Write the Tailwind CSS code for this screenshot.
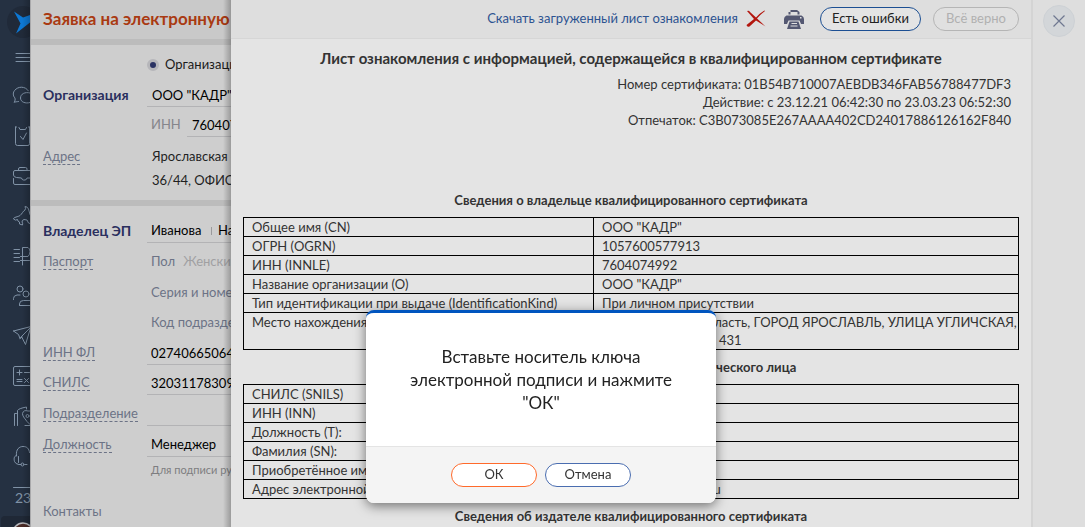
<!DOCTYPE html>
<html lang="ru">
<head>
<meta charset="utf-8">
<title>Заявка на электронную подпись</title>
<script src="https://cdn.jsdelivr.net/npm/@tailwindcss/browser@4"></script>
</head>
<body class="h-screen overflow-hidden bg-[#dedede] font-['Lato','Noto_Sans',sans-serif] text-[13px] text-[#333]">
<div class="flex h-full">

  <!-- Боковая навигация -->
  <nav class="relative w-[30px] shrink-0 overflow-hidden bg-[#253142] text-[#8092a6]" aria-label="Разделы">
    <svg class="block h-[527px] w-[30px]" viewBox="0 0 30 527" fill="none" stroke="currentColor" stroke-width="1" stroke-linecap="round" stroke-linejoin="round">
      <circle cx="23" cy="22" r="16" fill="#202a39" stroke="none"/>
      <path d="M14 11.500L23 17.500L30 15V22.500L16 33.500L20.500 23.500Z" fill="#0d78d4" stroke="none"/>
      <path d="M16 53.500H30M16 57.500H30M16 61.500H30"/>
      <path d="M18.500 101.500c-1.500 .3-3.500 .3-4.500 .8c1.200-1.500 1.500-3 .8-4.500c-2-2-2-5.500 0-7.500c3-4 10.500-4.500 13.500 .5"/>
      <path d="M30 93c-5-1.500-9.500 1-9.500 5c0 4 5 6 9.500 4.500"/>
      <path d="M15.500 127v16.500q0 2 2 2H28q1.500 0 1.500-2V127M15.500 127H16.500M28.500 127h1M19 127.500l1 2h5.500l1-2M20.500 136.500l2.500 3l3.500-6.500"/>
      <path d="M30 170.500H15q-1.500 0-1.500 1.500v3q0 2 3 2.500l5 .5q.5 2 2 2h1.500q1.500 0 2-2H30M13.500 178.500v4.500q0 1.500 1.500 1.500H30M18.500 170v-1q0-1.500 1.500-1.500h5.500q1.500 0 1.500 1.500v1"/>
      <path d="M30 214.500l-1.500-5.500q-1-2.500-3.500-2.500q1 2 0 3.500c-2 1-3 4-5 5.500c-2 1.500-6.500 1.500-6.500 3.500q2 2 4 .5q0 2 2 2.500v2l3 1q.5-2-.5-3q0-2 2-2.500l3 .5l1.500 3l1.500 .5"/>
      <path d="M14 249.500h5.500M14 253.500h5.500M14 257.500h5.500M14 261.500h5.500M22.500 265v-17.500H28q2 1 2 4t-2 5H20.500M20.500 260.500h9"/>
      <circle cx="20" cy="289" r="3"/><circle cx="26" cy="294" r="3"/>
      <path d="M13.500 299.500v-1q0-3 3.500-3.500h3M19.500 305v-1q0-3.500 4-3.500h6.500M19.500 305.500H30"/>
      <path d="M13.500 331L31 326.500L25.500 344.500L21.500 336.500L30 328M13.500 331l5 3.500l1.500 4l1.500-2M20 338.500l2-1.500"/>
      <path d="M30 366.500H15q-1.500 0-1.500 1.500v16q0 1.500 1.500 1.500h15M17 372.500h5M19.500 370v5M24.500 372.500h5M17 379.500h5M17 381.500h5M24.500 378.500l4 4M28.500 378.500l-4 4"/>
      <path d="M16.500 413.500h-2v12M17.500 425.500v-15q1-2 9-3.500v2M30 425.500h-5M30 424.500l-3-3c-3-4-4.500-5.500-4.500-8q1-4 5.500-2.500h2"/><circle cx="27.500" cy="416" r="1.500"/>
      <path d="M16.500 456c-1-7 3-9.500 6.500-9.500c4 0 6 2 6.500 6M16.500 455.500c-3 .5-2.500 4-2 6q1 2.500 4 3M18.500 456.500v6M19 464.500h2M25 464.500h2"/><circle cx="22.500" cy="464.500" r="1.500"/>
      <path d="M13.500 487.500H30"/>
      <text x="15" y="503" fill="currentColor" stroke="none" font-size="14">23</text>
      <rect x="1" y="516" width="32" height="14" rx="4" fill="#1f2836" stroke="none"/>
      <circle cx="23" cy="533" r="10" fill="#4a2a25" stroke="#b7b7bb" stroke-width="1.500"/>
    </svg>
    <div class="absolute inset-y-0 right-0 w-2 bg-linear-to-r from-transparent to-black/20"></div>
  </nav>

  <!-- Заявка -->
  <section class="relative w-[201px] shrink-0 overflow-hidden border-l border-[#a9a9ab] bg-[#cecece] whitespace-nowrap text-[#6c7386]">
    <h1 class="h-[39px] overflow-hidden bg-[#c9c9c9] pl-3 text-[17px] leading-[37px] font-bold text-[#a93a12]">Заявка на электронную подпись</h1>
    <div class="h-1.5 bg-[#bcbcbc]"></div>
    <form class="text-[13px]">
      <div class="flex h-[35px] items-center gap-1.5 pt-1 pl-[116px] text-[#1a1a1a]">
        <input id="org" type="radio" name="kind" checked class="size-3 shrink-0 appearance-none rounded-full border-3 border-[#b6b6ba] bg-[#2a3263]">
        <label for="org">Организация</label>
      </div>
      <div class="flex h-[30px] items-center pl-3">
        <label for="name" class="w-[104px] shrink-0 text-[14px] leading-6 font-bold text-[#2a2f5e]">Организация</label>
        <input id="name" class="h-6 w-40 border-b border-[#b3b3b5] pl-[5px] text-black" value='ООО "КАДР"'>
      </div>
      <div class="flex h-[30px] items-center pl-[120px]">
        <label for="inn" class="w-9 shrink-0 text-[#85858b]">ИНН</label>
        <input id="inn" class="h-6 w-40 border-b border-[#b3b3b5] pl-[5px] text-black" value="7604074992">
      </div>
      <div class="flex h-[60px] pt-1 pl-3 leading-6">
        <span class="w-[109px] shrink-0"><a href="#" class="border-b border-dashed border-[#6c7386]">Адрес</a></span>
        <p class="text-[#1f1f1f]">Ярославская область,<br>36/44, ОФИС 431</p>
      </div>
      <div class="h-1.5 bg-[#bcbcbc]"></div>
      <div class="flex h-10 items-center pt-2.5 pl-3">
        <label for="fio" class="w-[104px] shrink-0 text-[14px] leading-6 font-bold text-[#2a2f5e]">Владелец ЭП</label>
        <div class="flex h-6 w-40 shrink-0 items-center gap-1.5 border-b border-[#b3b3b5] pl-1 text-black">
          <input id="fio" class="w-[54px]" value="Иванова"><span class="h-2 w-px bg-[#9a9a9c]"></span><span>Наталья</span>
        </div>
      </div>
      <div class="flex h-[31px] items-center pl-3">
        <span class="w-[108px] shrink-0"><a href="#" class="border-b border-dashed border-[#6c7386]">Паспорт</a></span>
        <span>Пол</span><span class="pl-2 text-[#a0a0a2]">Женский</span>
      </div>
      <div class="flex h-[31px] items-center pl-[120px]">Серия и номер</div>
      <div class="flex h-[30px] items-center pl-[120px]">Код подразделения</div>
      <div class="flex h-[30px] items-center pl-3">
        <label for="innfl" class="w-[104px] shrink-0"><span class="border-b border-dashed border-[#6c7386]">ИНН ФЛ</span></label>
        <input id="innfl" class="h-6 w-40 border-b border-[#b3b3b5] pl-1 text-black" value="027406650640">
      </div>
      <div class="flex h-[30px] items-center pl-3">
        <label for="snils" class="w-[104px] shrink-0"><span class="border-b border-dashed border-[#6c7386]">СНИЛС</span></label>
        <input id="snils" class="h-6 w-40 border-b border-[#b3b3b5] pl-1 text-black" value="32031178309">
      </div>
      <div class="flex h-[31px] items-center pl-3">
        <label for="dep" class="w-[104px] shrink-0"><span class="border-b border-dashed border-[#6c7386]">Подразделение</span></label>
        <input id="dep" class="h-6 w-40 border-b border-[#b3b3b5] pl-1 text-black">
      </div>
      <div class="flex h-[31px] items-center pl-3">
        <label for="post" class="w-[104px] shrink-0"><span class="border-b border-dashed border-[#6c7386]">Должность</span></label>
        <input id="post" class="h-6 w-40 border-b border-[#b3b3b5] pl-1 text-black" value="Менеджер">
      </div>
      <p class="h-9 pl-[120px] text-[11px] leading-5 text-[#7d7d80]">Для подписи руководителя</p>
      <p class="pl-3 leading-[30px]">Контакты</p>
    </form>
    <div class="absolute inset-y-0 right-0 w-2 bg-linear-to-r from-transparent to-black/25"></div>
  </section>

  <!-- Лист ознакомления -->
  <main class="flex min-w-0 flex-1 flex-col overflow-hidden bg-[#e4e4e4]">
    <header class="flex h-[39px] shrink-0 items-center justify-end border-b border-[#d6d6d6] bg-[#dedede] pr-3">
      <a href="#" class="flex items-center gap-2 text-[#2d5391]">Скачать загруженный лист ознакомления
        <svg class="h-[18px] w-5" viewBox="0 0 20 18"><path d="M1 1Q3 0 4 2L10 7.500Q14 3 18.500 .5L19 1Q15 4 11 8.500L19.500 16.500L10 10.500L3.500 16.500Q1 17.500 .5 15L8 9Z" fill="#b3160e"/></svg>
      </a>
      <button type="button" aria-label="Печать" class="ml-4.5 text-[#545872]">
        <svg class="h-[19px] w-5" viewBox="0 0 20 19" fill="currentColor"><path d="M6.500 0H13L15.500 2V4.500H4.500V2H6.500ZM6.500 2V4.500H13.500V2ZM2.500 5.500H17.500Q20 6.500 20 9V14H17L15.500 10.500H4.500L3 14H0V9Q0 6.500 2.500 5.500ZM16 7V8.500H17.500V7ZM5.500 11.500H14.500L17 19H3ZM7.500 13V14H13V13ZM6.500 15.500V16.500H13.500V15.500Z" fill-rule="evenodd"/></svg>
      </button>
      <button type="button" class="ml-4 h-6 w-[101px] rounded-full border border-[#1c4f93] bg-[#e4e4e4] text-[#222]">Есть ошибки</button>
      <button type="button" disabled class="ml-3 h-6 w-[86px] rounded-full border border-[#b5b5b5] bg-[#e0e0e0] text-[#b0b0b0]">Всё верно</button>
    </header>
    <article class="px-3">
      <h2 class="pt-2 text-center text-[15px] leading-[22px] font-bold">Лист ознакомления с информацией, содержащейся в квалифицированном сертификате</h2>
      <div class="pt-1.5 pr-2 text-right leading-[18px]">
        <p>Номер сертификата: 01B54B710007AEBDB346FAB56788477DF3</p>
        <p>Действие: с 23.12.21 06:42:30 по 23.03.23 06:52:30</p>
        <p>Отпечаток: C3B073085E267AAAA402CD24017886126162F840</p>
      </div>
      <h3 class="mt-[62px] mb-2 text-center leading-[18px] font-bold">Сведения о владельце квалифицированного сертификата</h3>
      <table class="w-full table-fixed border-collapse border border-black leading-[18px] [&_td]:border [&_td]:border-black [&_td]:px-2 [&_td]:py-0 [&_td]:align-top">
        <colgroup><col class="w-[350px]"><col></colgroup>
        <tbody>
          <tr><td>Общее имя (CN)</td><td>ООО "КАДР"</td></tr>
          <tr><td>ОГРН (OGRN)</td><td>1057600577913</td></tr>
          <tr><td>ИНН (INNLE)</td><td>7604074992</td></tr>
          <tr><td>Название организации (О)</td><td>ООО "КАДР"</td></tr>
          <tr><td>Тип идентификации при выдаче (IdentificationKind)</td><td>При личном присутствии</td></tr>
          <tr><td>Место нахождения юридического лица</td><td class="pr-0! whitespace-nowrap">76 Ярославская область, ГОРОД ЯРОСЛАВЛЬ, УЛИЦА УГЛИЧСКАЯ,<br>ДОМ 36/44,ОФИС 431</td></tr>
        </tbody>
      </table>
      <h3 class="my-2 text-center leading-[18px] font-bold">Данные о владельце сертификата - физического лица</h3>
      <table class="w-full table-fixed border-collapse border border-black leading-[18px] [&_td]:border [&_td]:border-black [&_td]:px-2 [&_td]:py-0">
        <colgroup><col class="w-[350px]"><col></colgroup>
        <tbody>
          <tr><td>СНИЛС (SNILS)</td><td>32031178309</td></tr>
          <tr><td>ИНН (INN)</td><td>027406650640</td></tr>
          <tr><td>Должность (T):</td><td>Менеджер</td></tr>
          <tr><td>Фамилия (SN):</td><td>Иванова</td></tr>
          <tr><td>Приобретённое имя (G):</td><td>Наталья</td></tr>
          <tr><td>Адрес электронной почты (E):</td><td>ivanova_i@kadr76.ru</td></tr>
        </tbody>
      </table>
      <h3 class="my-2 text-center leading-[18px] font-bold">Сведения об издателе квалифицированного сертификата</h3>
    </article>
  </main>

  <aside class="w-[54px] shrink-0 border-l-2 border-[#d4d4d4] pt-[5px] pl-2.5">
    <button type="button" aria-label="Закрыть" class="flex size-8 items-center justify-center rounded-full border border-[#cdd1d5] bg-[#d3d6d9] text-[#6f7890]">
      <svg class="size-3" viewBox="0 0 12 12" fill="none" stroke="currentColor" stroke-width="1.200"><path d="M.5 .5L11.500 11.500M11.500 .5L.5 11.500"/></svg>
    </button>
  </aside>
</div>

<!-- Диалог -->
<div class="fixed inset-0 flex items-end justify-center pr-[3px] pb-6">
  <div role="dialog" aria-labelledby="msg" class="w-[350px] overflow-hidden rounded-lg border-t-3 border-[#0055bf] bg-white shadow-[0_3px_12px_rgba(0,0,0,0.5)]">
    <p id="msg" class="px-10 pt-8 pb-8 text-center text-[17px] leading-[23px] text-[#222]">Вставьте носитель ключа электронной подписи и нажмите "ОК"</p>
    <div class="flex h-[57px] items-center justify-center gap-2 border-t border-[#e4e4e4] bg-[#f4f4f4]">
      <button type="button" class="h-6 w-[86px] rounded-full border border-[#ff6a2b] bg-white">ОК</button>
      <button type="button" class="h-6 w-[86px] rounded-full border border-[#4a6db0] bg-white">Отмена</button>
    </div>
  </div>
</div>
</body>
</html>
